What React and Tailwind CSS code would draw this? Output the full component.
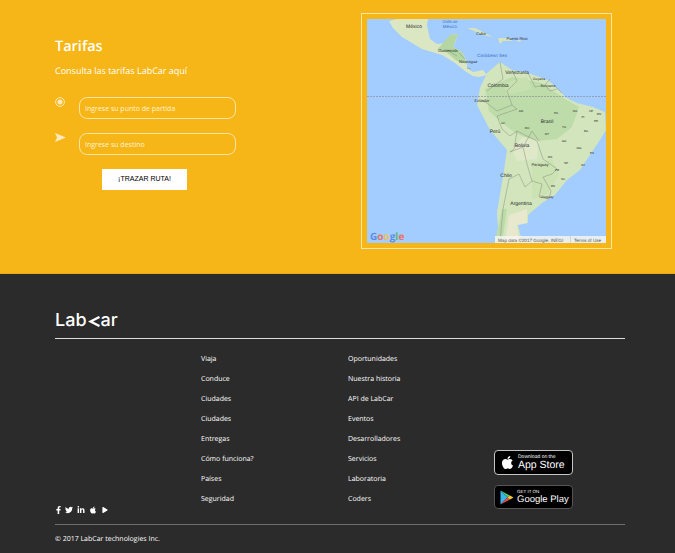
import { FaApple, FaFacebookF, FaLinkedinIn, FaPlay, FaTwitter } from 'react-icons/fa';

const COL_A = ['Viaja', 'Conduce', 'Ciudades', 'Ciudades', 'Entregas', 'Cómo funciona?', 'Países', 'Seguridad'];
const COL_B = ['Oportunidades', 'Nuestra historia', 'API de LabCar', 'Eventos', 'Desarrolladores', 'Servicios', 'Laboratoria', 'Coders'];

const LABELS = [
  ['México', 47, 9, 5],
  ['Cuba', 114, 16, 4],
  ['Puerto Rico', 150, 21, 4],
  ['Guatemala', 81, 33, 4],
  ['Nicaragua', 101, 44, 4],
  ['Venezuela', 150, 55, 5],
  ['Guyana', 172, 61, 3.5],
  ['Suriname', 181, 67.5, 3.5],
  ['Colombia', 131, 68, 5],
  ['Ecuador', 115, 83, 4],
  ['Brasil', 180, 104, 5],
  ['AM', 154, 93, 3],
  ['PA', 189, 95, 3],
  ['MA', 208, 93, 3],
  ['CE', 224, 93, 3],
  ['RN', 232, 96, 3],
  ['PI', 216, 99, 3],
  ['PE', 229, 103, 3],
  ['BA', 219, 113, 3],
  ['AC', 136, 105, 3],
  ['RO', 160, 110, 3],
  ['TO', 197, 109, 3],
  ['Perú', 128, 114, 5],
  ['Bolivia', 155, 128, 5],
  ['MT', 180, 116, 3],
  ['GO', 197, 123, 3],
  ['MG', 212, 130, 3],
  ['ES', 225, 135, 3],
  ['MS', 183, 139, 3],
  ['SP', 199, 145, 3],
  ['RJ', 216, 147, 3],
  ['Paraguay', 173, 147, 4],
  ['PR', 190, 152, 3],
  ['SC', 196, 161, 3],
  ['Chile', 139, 158, 5],
  ['RS', 186, 168, 3],
  ['Uruguay', 180, 179, 3.5],
  ['Argentina', 154, 186, 5],
];

function MapDrawing() {
  return (
    <svg viewBox="0 0 239 224" className="block w-[239px] h-[224px] bg-[#a3ccff]" style={{ fontFamily: '"Liberation Sans", sans-serif' }}>
      <g className="blur-[0.6px]">
        {/* mexico + central america */}
        <path d="M20 0L26 9L22 2L30 0L61 0L60 6L63 20L70 25L80 24L83 16L91 15L88 24L86 28L95 33L100 43L100 49L106 53L116 51L120 56L112 58L106 57L98 52L88 44L75 36L55 30L35 18L26 9Z" fill="#dbe6c3" />
        <path d="M70 31L83 16L91 15L86 28L95 33L100 45L90 42L79 33Z" fill="#b3d6a2" />
        {/* islands */}
        <path d="M100 9L108 9L116 13L126 18L116 16L107 12Z M131 19L141 19L146 22L136 22L133 25Z M148 21L154 21L153 23Z" fill="#d6e3bd" />
        {/* south america */}
        <path d="M110 86L113 69L120 54L133 43L145 51L161 54L181 61L195 74L198 78L210 84L226 88L238 93L239 111L233 121L213 151L200 161L188 176L175 184L161 196L161 204L151 206L155 223L128 223L131 209L130 193L136 158L140 131L123 111Z" fill="#d2e5bc" />
        <path d="M118 70L145 58L175 64L198 80L212 88L205 108L190 120L170 122L150 115L135 104L122 92Z" fill="#bddca9" />
        <path d="M136 64L160 58L165 70L140 76Z" fill="#c8dfb0" />
        <path d="M165 145L185 140L192 155L180 175L165 180Z" fill="#cbe2b3" />
        <path d="M128 223L131 209L135 190L140 190L137 210L135 223Z" fill="#bcdba9" />
        <path d="M145 130L156 118L172 122L170 140L150 142Z" fill="#dfe8c8" />
        <path d="M142 196L160 190L160 204L150 206L152 223L138 223Z" fill="#e8e8cf" />
      </g>
      {/* borders */}
      <g fill="none" stroke="#85907f" strokeWidth="0.5">
        <path d="M133 43L136 60L120 72M145 51L150 62L140 72L145 86L130 92L120 84L112 80" />
        <path d="M145 86L150 90L130 97L135 110L143 117L150 112L170 122L176 140L190 150L185 155L176 158L184 172L182 180L172 178L175 165L165 162L158 168L152 155L142 160L136 190L133 223" />
        <path d="M150 112L147 130L143 133L156 128L165 112L172 122M156 128L160 145L165 162" />
        <path d="M161 54L168 68L178 66L183 60M178 66L183 72L190 70M187 66L195 74" />
        <path d="M80 31L90 37M92 34L98 40M100 49L104 50" />
      </g>
      {/* equator */}
      <path d="M0 77.5H239" stroke="#8d8d9a" strokeWidth="0.7" strokeDasharray="2 1" />
      <text x="83" y="3.5" fontSize="4" fill="#3f73c4" textAnchor="middle">Golfo de</text>
      <text x="83" y="8.5" fontSize="4.5" fill="#3f73c4" textAnchor="middle">México</text>
      <text x="125" y="38" fontSize="4.5" fill="#3f73c4" textAnchor="middle">Caribbean Sea</text>
      {LABELS.map(([name, x, y, size], i) => (
        <text key={i} x={x} y={y} fontSize={size} fill="#2c2c2c" textAnchor="middle">{name}</text>
      ))}
      {/* google mark */}
      <text x="3" y="221" fontSize="10" fontWeight="700" style={{ fontFamily: '"Open Sans", sans-serif' }}>
        <tspan fill="#5b8ce8">G</tspan>
        <tspan fill="#e8705f">o</tspan>
        <tspan fill="#f2c14e">o</tspan>
        <tspan fill="#5b8ce8">g</tspan>
        <tspan fill="#67b56b">l</tspan>
        <tspan fill="#e8705f">e</tspan>
      </text>
      <rect x="128" y="217" width="111" height="7" fill="#f4f4f0" fillOpacity="0.85" />
      <text x="131" y="222.5" fontSize="4.6" fill="#555">Map data ©2017 Google, INEGI</text>
      <path d="M203.5 217V224" stroke="#bbb" strokeWidth="0.5" />
      <text x="207" y="222.5" fontSize="4.6" fill="#555">Terms of Use</text>
    </svg>
  );
}

function RouteInput({ icon, placeholder }) {
  return (
    <div className="flex items-start">
      <div className="w-[24px] h-[22px]">{icon}</div>
      <input
        readOnly
        placeholder={placeholder}
        className="w-[157px] h-[22px] rounded-lg border border-[#fbe3a6] bg-transparent px-[5px] text-[7px] font-medium outline-none placeholder:text-[#fdf3d8]"
      />
    </div>
  );
}

export default function App() {
  return (
    <div className="w-[675px] h-[553px] overflow-hidden bg-[#2b2b2b] [text-rendering:geometricPrecision]" style={{ fontFamily: '"Open Sans", sans-serif' }}>
      <section className="h-[274px] bg-[#f7b617] flex border-b border-[#e3a812]">
        <div className="w-[361px] pl-[55px] pt-[37px] text-white">
          <h1 className="text-[14.5px] leading-[20px] font-semibold">Tarifas</h1>
          <p className="mt-[7px] text-[9px] leading-[14px]">Consulta las tarifas LabCar aquí</p>
          <div className="mt-[19px] flex flex-col gap-[14px]">
            <RouteInput
              placeholder="Ingrese su punto de partida"
              icon={
                <svg viewBox="0 0 10 10" className="w-[10px] h-[10px]">
                  <circle cx="5" cy="5" r="4.4" fill="none" stroke="#fbe9bd" strokeWidth="1" />
                  <circle cx="5" cy="5" r="2.5" fill="#fbe9bd" />
                </svg>
              }
            />
            <RouteInput
              placeholder="Ingrese su destino"
              icon={
                <svg viewBox="0 0 11 9" className="w-[11px] h-[9px]">
                  <path d="M0 0L11 4.5L0 9L2 4.5Z" fill="#fbe9bd" />
                </svg>
              }
            />
          </div>
          <button
            className="block ml-[47px] mt-[14px] w-[85px] h-[21px] bg-white text-black text-[7px] font-normal"
            style={{ fontFamily: '"Liberation Sans", sans-serif' }}
          >
            ¡TRAZAR RUTA!
          </button>
        </div>
        <div className="pt-[13px]">
          <div className="border border-[#fde6a8] p-[5px]">
            <MapDrawing />
          </div>
        </div>
      </section>

      <footer className="pl-[55px] pr-[50px] pt-[37px] text-white">
        <div className="flex items-center h-[20px] text-[18px] leading-[20px] font-medium" style={{ fontFamily: 'Inter, sans-serif' }}>
          Lab
          <svg viewBox="0 0 12 11" className="w-[12px] h-[11px] mx-[1px] mt-[1px]">
            <path d="M11.5 1L2.5 5.5L11.5 10" fill="none" stroke="white" strokeWidth="2.4" />
          </svg>
          ar
        </div>
        <div className="mt-[7px] h-px bg-[#dcdcdc]" />
        <div className="grid grid-cols-[146px_147px_146px_1fr] h-[185px]">
          <div className="flex items-end gap-[4px] pl-[1px] pb-[10px] text-[8px]">
            <FaFacebookF className="w-[5px]" />
            <FaTwitter />
            <FaLinkedinIn />
            <FaApple />
            <FaPlay className="ml-[1px] text-[6px] mb-[1px]" />
          </div>
          {[COL_A, COL_B].map((col, i) => (
            <ul key={i} className="pt-[15px] flex flex-col gap-[8px] text-[7px] font-medium leading-[12px]">
              {col.map((item) => (
                <li key={item}>{item}</li>
              ))}
            </ul>
          ))}
          <div className="pt-[111px] flex flex-col gap-[10px]">
            <div className="flex items-center w-[79px] h-[25px] rounded-[4px] bg-black border border-[#c4c4c4] text-white">
              <FaApple className="ml-[5px] text-[15px]" />
              <div className="ml-[3px] whitespace-nowrap" style={{ fontFamily: '"Liberation Sans", sans-serif' }}>
                <div className="text-[5px] leading-[6px]">Download on the</div>
                <div className="text-[10.5px] leading-[11px] font-medium">App Store</div>
              </div>
            </div>
            <div className="flex items-center w-[79px] h-[24px] rounded-[4px] bg-black border border-[#555555] text-white">
              <svg viewBox="0 0 14 15" className="ml-[5px] w-[14px] h-[15px] shrink-0">
                <path d="M0.5 0.5L7.5 7.5L0.5 14.5Z" fill="#38b6e8" />
                <path d="M0.5 0.5L10 5.5L7.5 7.5Z" fill="#4bc27a" />
                <path d="M0.5 14.5L10 9.5L7.5 7.5Z" fill="#e84b4b" />
                <path d="M10 5.5L13.5 7.5L10 9.5L7.5 7.5Z" fill="#f9c934" />
              </svg>
              <div className="ml-[3px] whitespace-nowrap" style={{ fontFamily: '"Liberation Sans", sans-serif' }}>
                <div className="text-[4.5px] leading-[5px]">GET IT ON</div>
                <div className="text-[9.5px] leading-[11px]">Google Play</div>
              </div>
            </div>
          </div>
        </div>
        <div className="h-px bg-[#6e6e6e]" />
        <p className="mt-[10px] text-[7px] leading-[10px]">© 2017 LabCar technologies Inc.</p>
      </footer>
    </div>
  );
}
